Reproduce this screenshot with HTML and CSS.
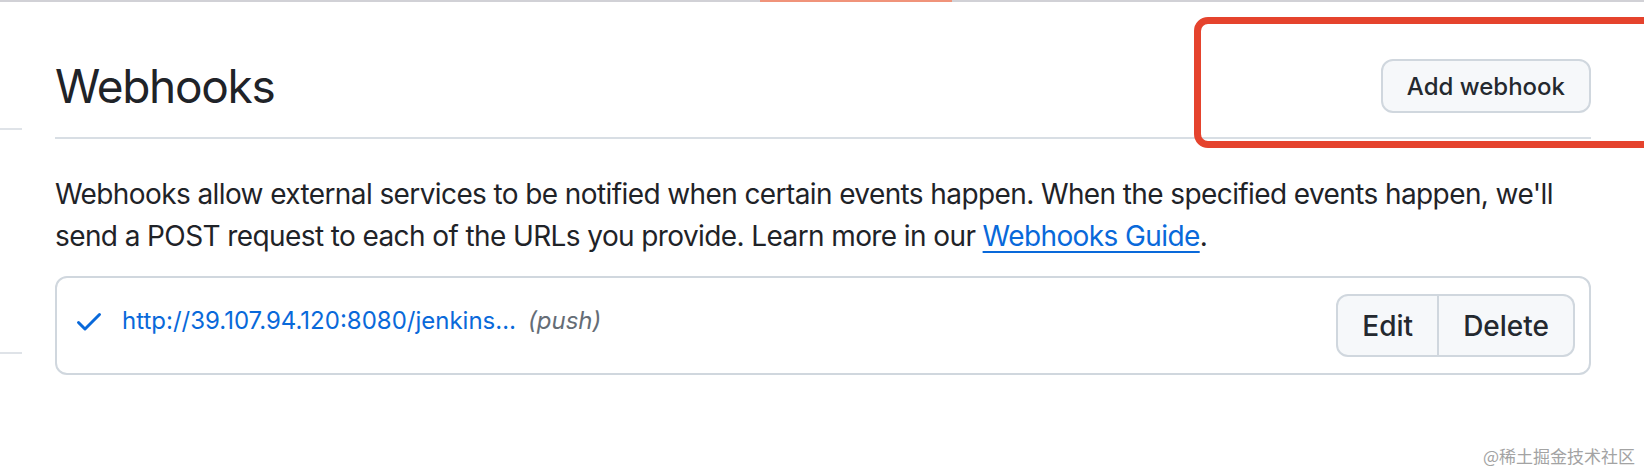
FILE: index.html
```html
<!DOCTYPE html>
<html lang="en">
<head>
<meta charset="utf-8">
<title>Webhooks</title>
<link rel="stylesheet" href="styles.css">
</head>
<body>
<div class="topbar"><div class="topbar-active"></div></div>
<div class="page">
  <nav class="sidebar">
    <div class="nav-item nav-item-first"></div>
    <div class="nav-item nav-item-second"></div>
  </nav>
  <main class="main">
    <div class="subhead">
      <h2 class="subhead-title">Webhooks</h2>
      <button class="btn btn-sm">Add webhook</button>
    </div>
    <p class="intro">Webhooks allow external services to be notified when certain events happen. When the specified events happen, we'll send a POST request to each of the URLs you provide. Learn more in our <a class="link" href="#">Webhooks Guide</a>.</p>
    <div class="hook-box">
      <div class="hook-info">
        <svg class="check" viewBox="0 0 16 16" width="32" height="32" aria-hidden="true"><path d="M13.78 4.22a.75.75 0 0 1 0 1.06l-7.25 7.25a.75.75 0 0 1-1.06 0L2.22 9.28a.751.751 0 0 1 .018-1.042.751.751 0 0 1 1.042-.018L6 10.94l6.72-6.72a.75.75 0 0 1 1.06 0Z"/></svg>
        <a class="hook-url" href="#">http://39.107.94.120:8080/jenkins…</a>
        <span class="hook-events">(push)</span>
      </div>
      <div class="btn-group">
        <button class="btn btn-group-item">Edit</button>
        <button class="btn btn-group-item">Delete</button>
      </div>
    </div>
  </main>
</div>
<div class="annotation"></div>
<div class="watermark">@稀土掘金技术社区</div>
</body>
</html>
```

FILE: styles.css
```css
html, body {
  margin: 0;
  padding: 0;
}
body {
  width: 1644px;
  height: 474px;
  overflow: hidden;
  position: relative;
  background: #ffffff;
  font-family: Inter, "Liberation Sans", "Noto Sans CJK SC", sans-serif;
  color: #1f2328;
}
.topbar {
  height: 2px;
  background: #d1d1d6;
  display: flex;
}
.topbar-active {
  margin-left: 760px;
  width: 192px;
  height: 2px;
  background: #f0937a;
}
.page {
  display: flex;
}
.sidebar {
  width: 22px;
  flex: none;
  display: flex;
  flex-direction: column;
}
.nav-item {
  border-bottom: 2px solid #dfe3e8;
}
.nav-item-first { height: 126px; }
.nav-item-second { height: 222px; }
.main {
  margin-left: 33px;
  width: 1536px;
}
.subhead {
  display: flex;
  align-items: center;
  justify-content: space-between;
  margin-top: 57px;
  padding-bottom: 24px;
  border-bottom: 2px solid #d8dee4;
}
.subhead-title {
  margin: 0;
  font-size: 46px;
  font-weight: 400;
  line-height: 54px;
  letter-spacing: -1.3px;
  color: #1f2328;
}
.btn {
  font-family: Inter, "Liberation Sans", sans-serif;
  background: #f6f8fa;
  border: 2px solid #d0d7de;
  color: #24292f;
  cursor: pointer;
}
.btn-sm {
  height: 54px;
  padding: 0 24px;
  border-radius: 12px;
  font-size: 24px;
  font-weight: 500;
}
.intro {
  margin: 34px 0 19px;
  font-size: 28px;
  line-height: 42px;
  letter-spacing: -0.6px;
  color: #1f2328;
}
.link {
  color: #0969da;
  text-decoration: underline;
  text-underline-offset: 5px;
  text-decoration-thickness: 2px;
}
.hook-box {
  display: flex;
  align-items: center;
  justify-content: space-between;
  border: 2px solid #d0d7de;
  border-radius: 12px;
  padding: 16px 14px 16px 16px;
}
.hook-info {
  display: flex;
  align-items: center;
  padding-bottom: 10px;
}
.check {
  fill: #0969da;
  flex: none;
}
.hook-url {
  margin-left: 17px;
  font-size: 24px;
  color: #0969da;
  text-decoration: none;
}
.hook-events {
  margin-left: 12px;
  font-size: 24px;
  font-style: italic;
  color: #656d76;
}
.btn-group {
  display: flex;
}
.btn-group-item {
  height: 63px;
  padding: 0 24px;
  font-size: 28px;
  font-weight: 500;
  border-radius: 0;
}
.btn-group-item:first-child {
  border-radius: 12px 0 0 12px;
}
.btn-group-item:last-child {
  border-left: 0;
  border-radius: 0 12px 12px 0;
}
.annotation {
  position: absolute;
  left: 1194px;
  top: 17px;
  width: 520px;
  height: 117px;
  border: 7px solid #e5432d;
  border-radius: 14px;
}
.watermark {
  position: absolute;
  right: 9px;
  top: 445px;
  font-family: "Noto Sans CJK SC", sans-serif;
  font-size: 17px;
  line-height: 22px;
  color: #a3a3a3;
}
```
